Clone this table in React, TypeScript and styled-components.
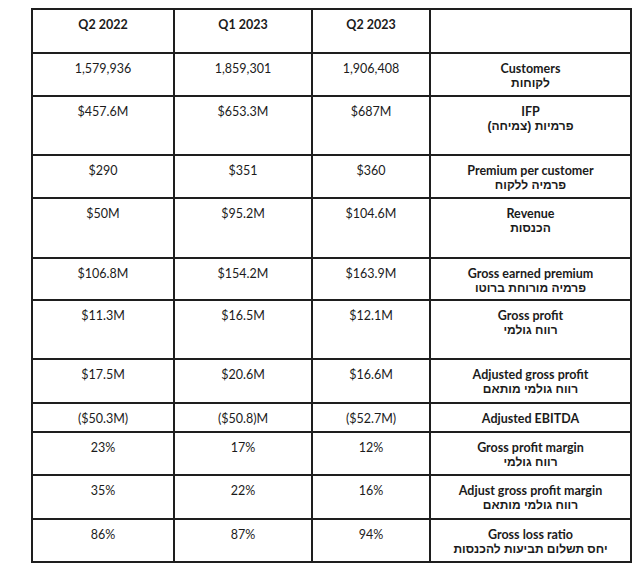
import React from "react";
import styled, { createGlobalStyle } from "styled-components";

const Global = createGlobalStyle`
  html, body { margin: 0; padding: 0; background: #fff; }
  body { font-family: "Lato", "Liberation Sans", sans-serif; color: #1b1b1b; }
`;

const Page = styled.div`
  padding: 8px 0 0 31px;
`;

const Grid = styled.div`
  display: grid;
  grid-template-columns: 140px 136px 116px 199px;
  gap: 2px;
  padding: 2px;
  background: #1e1e1e;
  width: max-content;
`;

const Cell = styled.div<{ $h: number; $bold?: boolean }>`
  background: #fff;
  height: ${(p) => p.$h}px;
  box-sizing: border-box;
  padding-top: 7px;
  text-align: center;
  font-size: 12.5px;
  line-height: 15px;
  font-weight: ${(p) => (p.$bold ? 700 : 400)};
`;

const Label = styled.div`
  font-weight: 700;
`;

const Hebrew = styled.div`
  font-family: "Liberation Sans", "DejaVu Sans", sans-serif;
  font-weight: 700;
  font-size: 12px;
`;

type Row = { vals: string[]; en: string; he?: string; h: number };

const rows: Row[] = [
  { vals: ["1,579,936", "1,859,301", "1,906,408"], en: "Customers", he: "לקוחות", h: 41 },
  { vals: ["$457.6M", "$653.3M", "$687M"], en: "IFP", he: "פרמיות (צמיחה)", h: 57 },
  { vals: ["$290", "$351", "$360"], en: "Premium per customer", he: "פרמיה ללקוח", h: 41 },
  { vals: ["$50M", "$95.2M", "$104.6M"], en: "Revenue", he: "הכנסות", h: 58 },
  { vals: ["$106.8M", "$154.2M", "$163.9M"], en: "Gross earned premium", he: "פרמיה מורוחת ברוטו", h: 40 },
  { vals: ["$11.3M", "$16.5M", "$12.1M"], en: "Gross profit", he: "רווח גולמי", h: 57 },
  { vals: ["$17.5M", "$20.6M", "$16.6M"], en: "Adjusted gross profit", he: "רווח גולמי מותאם", h: 42 },
  { vals: ["($50.3M)", "($50.8)M", "($52.7M)"], en: "Adjusted EBITDA", h: 27 },
  { vals: ["23%", "17%", "12%"], en: "Gross profit margin", he: "רווח גולמי", h: 41 },
  { vals: ["35%", "22%", "16%"], en: "Adjust gross profit margin", he: "רווח גולמי מותאם", h: 42 },
  { vals: ["86%", "87%", "94%"], en: "Gross loss ratio", he: "יחס תשלום תביעות להכנסות", h: 41 },
];

const headers = ["Q2 2022", "Q1 2023", "Q2 2023", ""];

export default function App() {
  return (
    <>
      <Global />
      <Page>
        <Grid>
          {headers.map((h, i) => (
            <Cell key={"h" + i} $h={42} $bold>
              {h}
            </Cell>
          ))}
          {rows.map((r, ri) => (
            <React.Fragment key={ri}>
              {r.vals.map((v, vi) => (
                <Cell key={vi} $h={r.h}>
                  {v}
                </Cell>
              ))}
              <Cell $h={r.h}>
                <Label>{r.en}</Label>
                {r.he && <Hebrew dir="rtl">{r.he}</Hebrew>}
              </Cell>
            </React.Fragment>
          ))}
        </Grid>
      </Page>
    </>
  );
}
